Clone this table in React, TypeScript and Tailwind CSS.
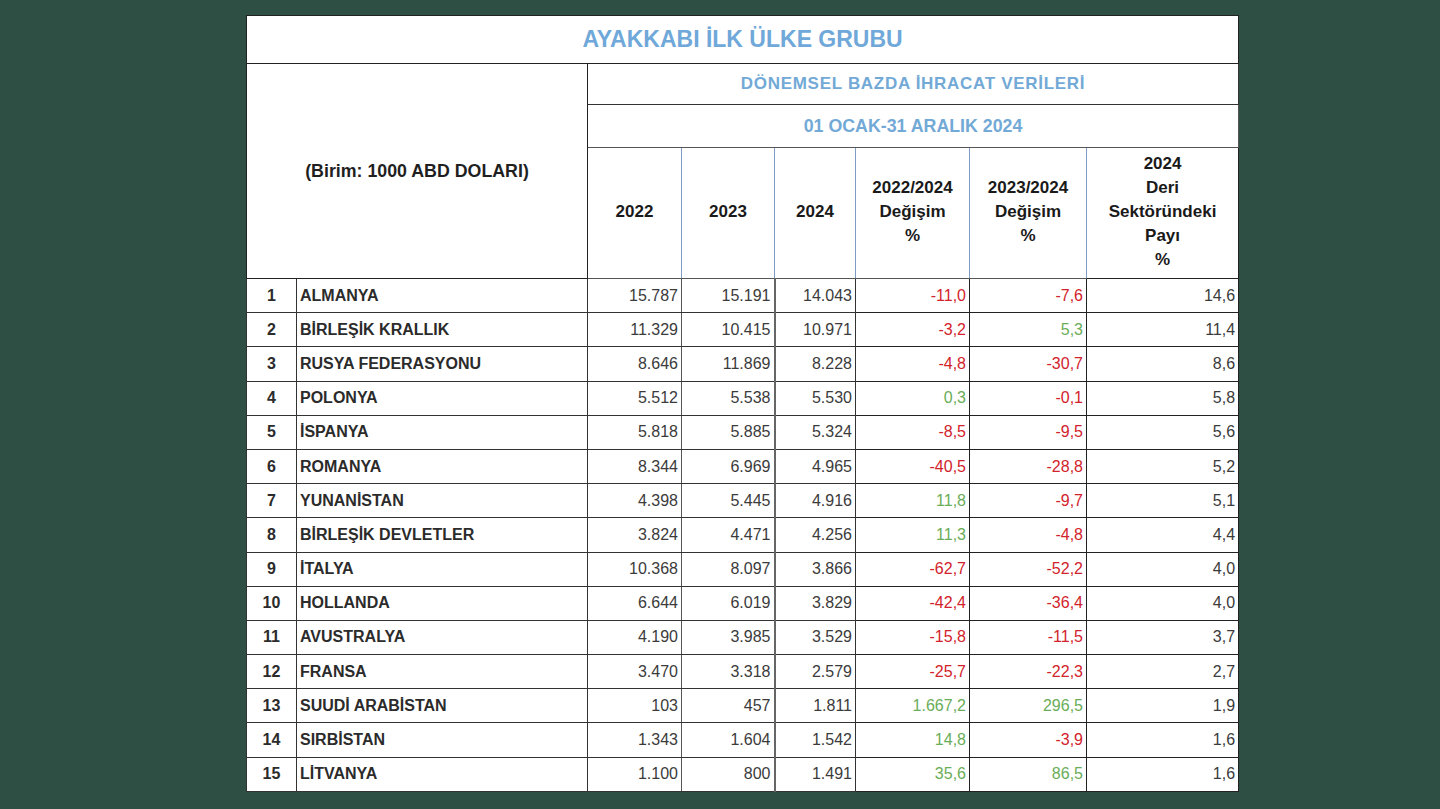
import React from "react";

type Row = {
  n: number;
  country: string;
  y22: string;
  y23: string;
  y24: string;
  c1: string;
  c2: string;
  share: string;
};

const rows: Row[] = [
  { n: 1, country: "ALMANYA", y22: "15.787", y23: "15.191", y24: "14.043", c1: "-11,0", c2: "-7,6", share: "14,6" },
  { n: 2, country: "BİRLEŞİK KRALLIK", y22: "11.329", y23: "10.415", y24: "10.971", c1: "-3,2", c2: "5,3", share: "11,4" },
  { n: 3, country: "RUSYA FEDERASYONU", y22: "8.646", y23: "11.869", y24: "8.228", c1: "-4,8", c2: "-30,7", share: "8,6" },
  { n: 4, country: "POLONYA", y22: "5.512", y23: "5.538", y24: "5.530", c1: "0,3", c2: "-0,1", share: "5,8" },
  { n: 5, country: "İSPANYA", y22: "5.818", y23: "5.885", y24: "5.324", c1: "-8,5", c2: "-9,5", share: "5,6" },
  { n: 6, country: "ROMANYA", y22: "8.344", y23: "6.969", y24: "4.965", c1: "-40,5", c2: "-28,8", share: "5,2" },
  { n: 7, country: "YUNANİSTAN", y22: "4.398", y23: "5.445", y24: "4.916", c1: "11,8", c2: "-9,7", share: "5,1" },
  { n: 8, country: "BİRLEŞİK DEVLETLER", y22: "3.824", y23: "4.471", y24: "4.256", c1: "11,3", c2: "-4,8", share: "4,4" },
  { n: 9, country: "İTALYA", y22: "10.368", y23: "8.097", y24: "3.866", c1: "-62,7", c2: "-52,2", share: "4,0" },
  { n: 10, country: "HOLLANDA", y22: "6.644", y23: "6.019", y24: "3.829", c1: "-42,4", c2: "-36,4", share: "4,0" },
  { n: 11, country: "AVUSTRALYA", y22: "4.190", y23: "3.985", y24: "3.529", c1: "-15,8", c2: "-11,5", share: "3,7" },
  { n: 12, country: "FRANSA", y22: "3.470", y23: "3.318", y24: "2.579", c1: "-25,7", c2: "-22,3", share: "2,7" },
  { n: 13, country: "SUUDİ ARABİSTAN", y22: "103", y23: "457", y24: "1.811", c1: "1.667,2", c2: "296,5", share: "1,9" },
  { n: 14, country: "SIRBİSTAN", y22: "1.343", y23: "1.604", y24: "1.542", c1: "14,8", c2: "-3,9", share: "1,6" },
  { n: 15, country: "LİTVANYA", y22: "1.100", y23: "800", y24: "1.491", c1: "35,6", c2: "86,5", share: "1,6" },
];

function changeColor(v: string) {
  return v.startsWith("-") ? "text-[#d2232c]" : "text-[#6aad58]";
}

export default function App() {
  return (
    <div
      className="min-h-screen bg-[#2d4f44] pt-[15px] pl-[246px]"
      style={{ fontFamily: '"Liberation Sans", Arial, sans-serif' }}
    >
      <table className="w-[992px] table-fixed border-collapse bg-white">
        <colgroup>
          <col className="w-[50px]" />
          <col className="w-[291px]" />
          <col className="w-[94px]" />
          <col className="w-[93px]" />
          <col className="w-[81px]" />
          <col className="w-[114px]" />
          <col className="w-[117px]" />
          <col className="w-[152px]" />
        </colgroup>
        <tbody>
          {/* Title */}
          <tr className="h-[48px]">
            <td
              colSpan={8}
              className="border border-[#222] text-center align-middle text-[23px] font-bold text-[#6fa8d9]"
            >
              AYAKKABI İLK ÜLKE GRUBU
            </td>
          </tr>
          <tr className="h-[41px]">
            <td
              colSpan={2}
              rowSpan={3}
              className="border border-[#222] text-center align-middle text-[17.8px] font-bold text-[#1f1f1f]"
            >
              (Birim: 1000 ABD DOLARI)
            </td>
            <td
              colSpan={6}
              className="border border-[#333] text-center align-middle text-[17px] font-bold tracking-[0.7px] text-[#72a9d6]"
            >
              DÖNEMSEL BAZDA İHRACAT VERİLERİ
            </td>
          </tr>
          <tr className="h-[43px]">
            <td
              colSpan={6}
              className="border border-[#555] text-center align-middle text-[17.8px] font-bold text-[#72a9d6]"
            >
              01 OCAK-31 ARALIK 2024
            </td>
          </tr>
          {/* Column headers */}
          <tr className="h-[131px] text-[17px] font-bold leading-[24px] text-[#1a1a1a]">
            <td className="border-y border-r border-y-[#555] border-r-[#7f9cc4] pb-[3px] text-center align-middle">2022</td>
            <td className="border-y border-r border-y-[#555] border-r-[#7f9cc4] pb-[3px] text-center align-middle">2023</td>
            <td className="border-y border-r border-y-[#555] border-r-[#7f9cc4] pb-[3px] text-center align-middle">2024</td>
            <td className="border-y border-r border-y-[#555] border-r-[#7f9cc4] pb-[3px] text-center align-middle">
              2022/2024
              <br />
              Değişim
              <br />%
            </td>
            <td className="border-y border-r border-y-[#555] border-r-[#7f9cc4] pb-[3px] text-center align-middle">
              2023/2024
              <br />
              Değişim
              <br />%
            </td>
            <td className="border border-[#222] border-l-[#7f9cc4] pb-[3px] text-center align-middle">
              2024
              <br />
              Deri
              <br />
              Sektöründeki
              <br />
              Payı
              <br />%
            </td>
          </tr>

          {rows.map((r) => (
            <tr key={r.n} className="h-[34.2px] text-[16px] text-[#3b3b3b]">
              <td className="border border-[#333] text-center align-middle font-bold text-[#2b2b2b]">{r.n}</td>
              <td className="border border-[#333] pl-[3px] text-left align-middle font-bold text-[#2b2b2b]">
                {r.country}
              </td>
              <td className="border border-[#333] border-r-[#555] pr-[3px] text-right align-middle">{r.y22}</td>
              <td className="border border-[#333] border-r-[#666] pr-[3px] text-right align-middle">{r.y23}</td>
              <td className="border border-[#333] border-l-2 border-l-[#666] pr-[3px] text-right align-middle">{r.y24}</td>
              <td className={`border border-[#222] pr-[3px] text-right align-middle ${changeColor(r.c1)}`}>{r.c1}</td>
              <td className={`border border-[#222] pr-[3px] text-right align-middle ${changeColor(r.c2)}`}>{r.c2}</td>
              <td className="border border-[#222] pr-[3px] text-right align-middle">{r.share}</td>
            </tr>
          ))}
        </tbody>
      </table>
    </div>
  );
}
